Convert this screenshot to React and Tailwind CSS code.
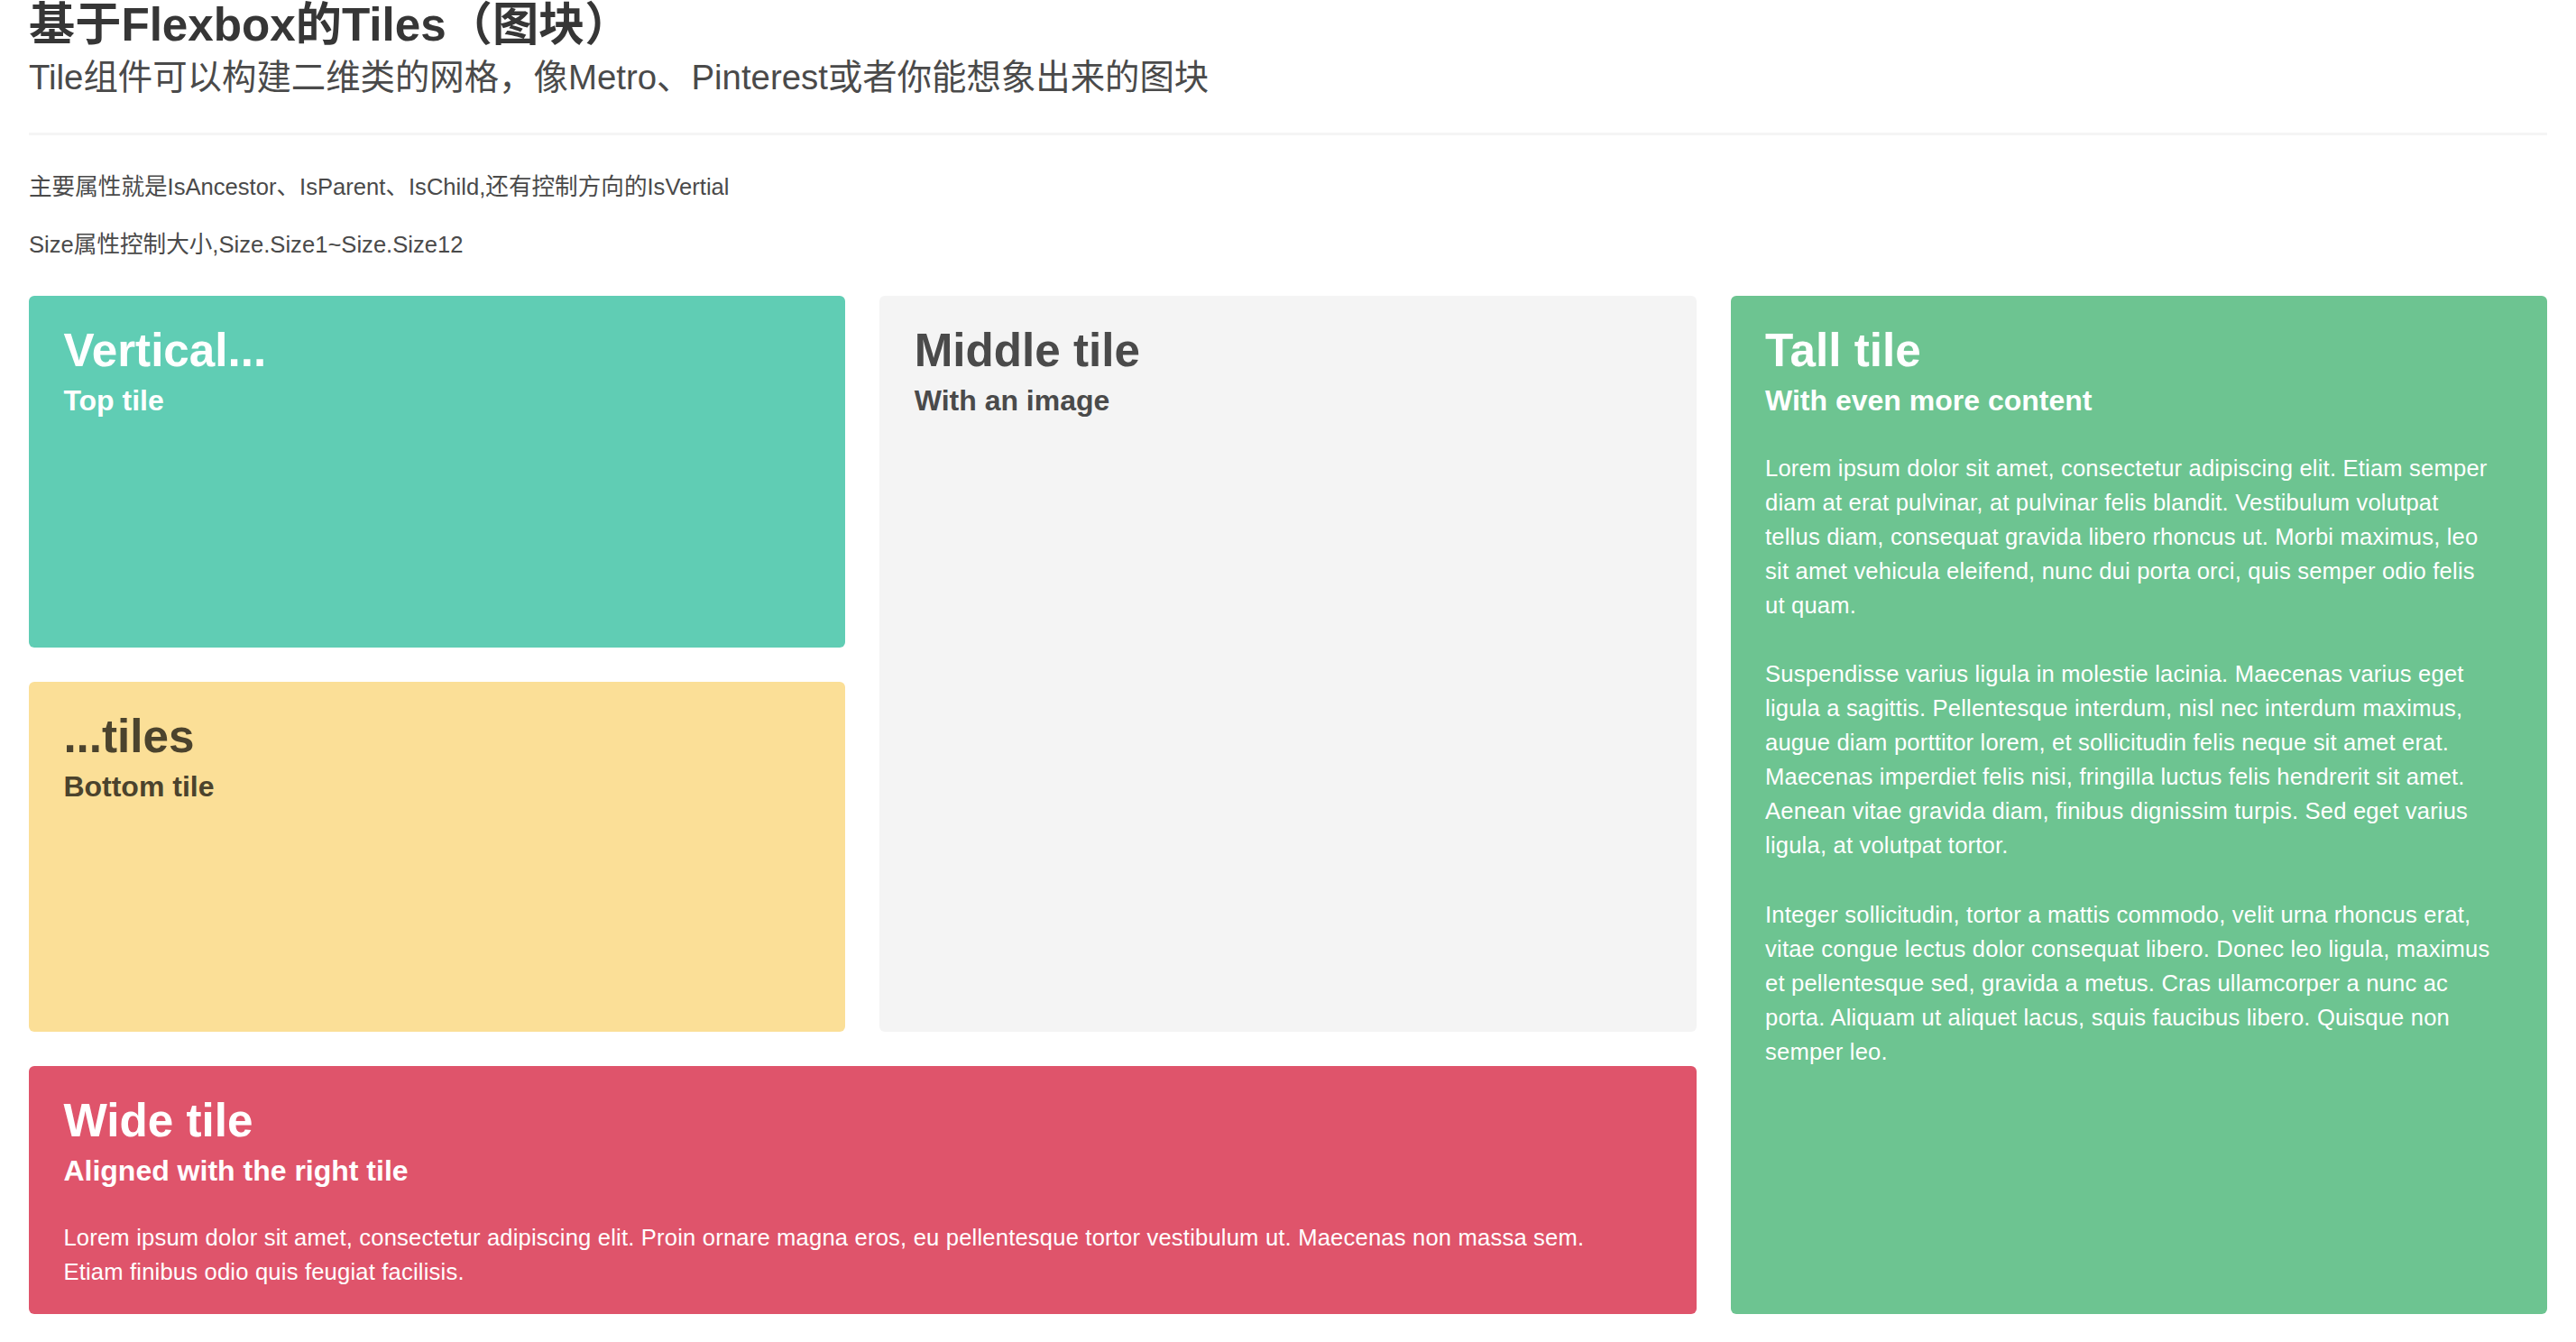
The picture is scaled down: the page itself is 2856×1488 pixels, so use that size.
const font = { fontFamily: '"Liberation Sans", "Noto Sans CJK SC", sans-serif' };

function TileHead({ title, subtitle }) {
  return (
    <>
      <p className="text-[51.2px] leading-[1.125] font-bold">{title}</p>
      <p className="mt-[6px] text-[32px] leading-[1.25] font-bold">{subtitle}</p>
    </>
  );
}

export default function App() {
  return (
    <div className="min-h-screen bg-white text-[#4a4a4a] px-[32px]" style={font}>
      <h1 className="-mt-[1px] text-[51.2px] leading-[1.125] font-bold text-[#363636]">基于Flexbox的Tiles（图块）</h1>
      <h2 className="mt-[5px] text-[38.4px] leading-[1.25] text-[#4a4a4a]">
        Tile组件可以构建二维类的网格，像Metro、Pinterest或者你能想象出来的图块
      </h2>
      <div className="mt-[37px] h-[3px] bg-[#f5f5f5]" />
      <div className="mt-[38px] text-[25.6px] leading-[1.5]">
        <p className="mb-[25.6px]">主要属性就是IsAncestor、IsParent、IsChild,还有控制方向的IsVertial</p>
        <p>Size属性控制大小,Size.Size1~Size.Size12</p>
      </div>

      <div className="mt-[38px] grid grid-cols-3 grid-rows-[390px_388px_275px] gap-[38px]">
        <div className="col-start-1 row-start-1 rounded-[6px] bg-[#60cdb4] text-white pt-[32px] pl-[38.4px] pr-[64px]">
          <TileHead title="Vertical..." subtitle="Top tile" />
        </div>
        <div className="col-start-1 row-start-2 rounded-[6px] bg-[#fbdf97] text-[#4b432d] pt-[32px] pl-[38.4px] pr-[64px]">
          <TileHead title="...tiles" subtitle="Bottom tile" />
        </div>
        <div className="col-start-2 row-start-1 row-span-2 rounded-[6px] bg-[#f4f4f4] text-[#4a4a4a] pt-[32px] pl-[38.4px] pr-[64px]">
          <TileHead title="Middle tile" subtitle="With an image" />
        </div>
        <div className="col-start-1 col-span-2 row-start-3 rounded-[6px] bg-[#df546b] text-white pt-[32px] pl-[38.4px] pr-[120px] overflow-hidden">
          <TileHead title="Wide tile" subtitle="Aligned with the right tile" />
          <p className="mt-[35px] text-[25.6px] leading-[38px] tracking-[0.18px]">
            Lorem ipsum dolor sit amet, consectetur adipiscing elit. Proin ornare magna eros, eu pellentesque tortor vestibulum ut. Maecenas non massa sem. Etiam finibus odio quis feugiat facilisis.
          </p>
        </div>
        <div className="col-start-3 row-start-1 row-span-3 rounded-[6px] bg-[#6dc491] text-white pt-[32px] pl-[38.4px] pr-[61px]">
          <TileHead title="Tall tile" subtitle="With even more content" />
          <div className="mt-[36px] text-[25.6px] leading-[38px] tracking-[0.18px] flex flex-col gap-[38.5px]">
            <p>
              Lorem ipsum dolor sit amet, consectetur adipiscing elit. Etiam semper diam at erat pulvinar, at pulvinar felis blandit. Vestibulum volutpat tellus diam, consequat gravida libero rhoncus ut. Morbi maximus, leo sit amet vehicula eleifend, nunc dui porta orci, quis semper odio felis ut quam.
            </p>
            <p>
              Suspendisse varius ligula in molestie lacinia. Maecenas varius eget ligula a sagittis. Pellentesque interdum, nisl nec interdum maximus, augue diam porttitor lorem, et sollicitudin felis neque sit amet erat. Maecenas imperdiet felis nisi, fringilla luctus felis hendrerit sit amet. Aenean vitae gravida diam, finibus dignissim turpis. Sed eget varius ligula, at volutpat tortor.
            </p>
            <p>
              Integer sollicitudin, tortor a mattis commodo, velit urna rhoncus erat, vitae congue lectus dolor consequat libero. Donec leo ligula, maximus et pellentesque sed, gravida a metus. Cras ullamcorper a nunc ac porta. Aliquam ut aliquet lacus, squis faucibus libero. Quisque non semper leo.
            </p>
          </div>
        </div>
      </div>
    </div>
  );
}
